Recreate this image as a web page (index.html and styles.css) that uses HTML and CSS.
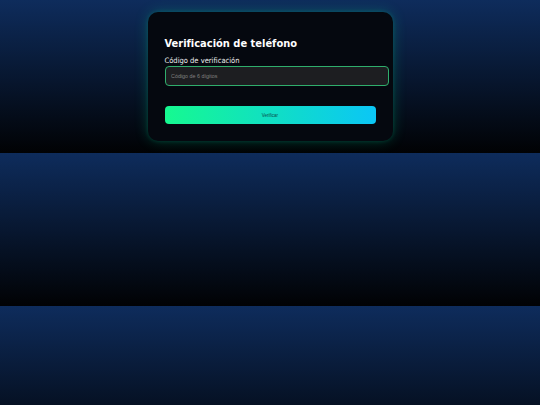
FILE: index.html
```html
<!DOCTYPE html>
<html lang="es">
<head>
<meta charset="utf-8">
<title>Verificación de teléfono</title>
<link rel="stylesheet" href="styles.css">
</head>
<body>
  <div class="card">
    <h2 class="title">Verificación de teléfono</h2>
    <label class="label" for="code">Código de verificación</label>
    <input class="input" id="code" type="text" placeholder="Código de 6 dígitos">
    <button class="btn" type="button">Verificar</button>
  </div>
</body>
</html>
```

FILE: styles.css
```css
html {
  margin: 0;
}
body {
  margin: 0;
  padding: 12px 0;
  background: linear-gradient(to bottom, #0e2c5c 0%, #07152c 55%, #010204 100%);
  font-family: "DejaVu Sans", sans-serif;
}
.card {
  width: 211px;
  margin: 0 auto;
  padding: 17px 17px 17px 17px;
  background: #05080f;
  border-radius: 10px;
  box-shadow: 0 0 14px rgba(0, 230, 150, 0.24), 0 0 4px rgba(0, 200, 150, 0.2);
  display: flex;
  flex-direction: column;
}
.title {
  margin: 8px 0 5px;
  font-family: "DejaVu Sans", sans-serif;
  font-stretch: condensed;
  font-weight: bold;
  font-size: 11px;
  line-height: 14px;
  color: #ffffff;
}
.label {
  font-family: "DejaVu Sans", sans-serif;
  font-stretch: condensed;
  font-size: 7.5px;
  line-height: 9px;
  color: #f0f0f0;
  margin-bottom: 1px;
}
.input {
  box-sizing: border-box;
  width: calc(100% + 13px);
  height: 20px;
  padding: 0 5.5px;
  margin: 0;
  border: 1.5px solid #2fae6c;
  border-radius: 4px;
  background: #1d1e21;
  color: #ddd;
  font-family: "Liberation Sans", Arial, sans-serif;
  font-size: 5.4px;
  outline: none;
}
.input::placeholder {
  color: #808080;
}
.btn {
  margin-top: 20px;
  height: 18px;
  border: none;
  border-radius: 4px;
  background: linear-gradient(to right, #16f990, #0bc6f6);
  color: #0b4b4c;
  font-family: "Liberation Sans", Arial, sans-serif;
  font-size: 4.5px;
  padding: 0;
}
```
